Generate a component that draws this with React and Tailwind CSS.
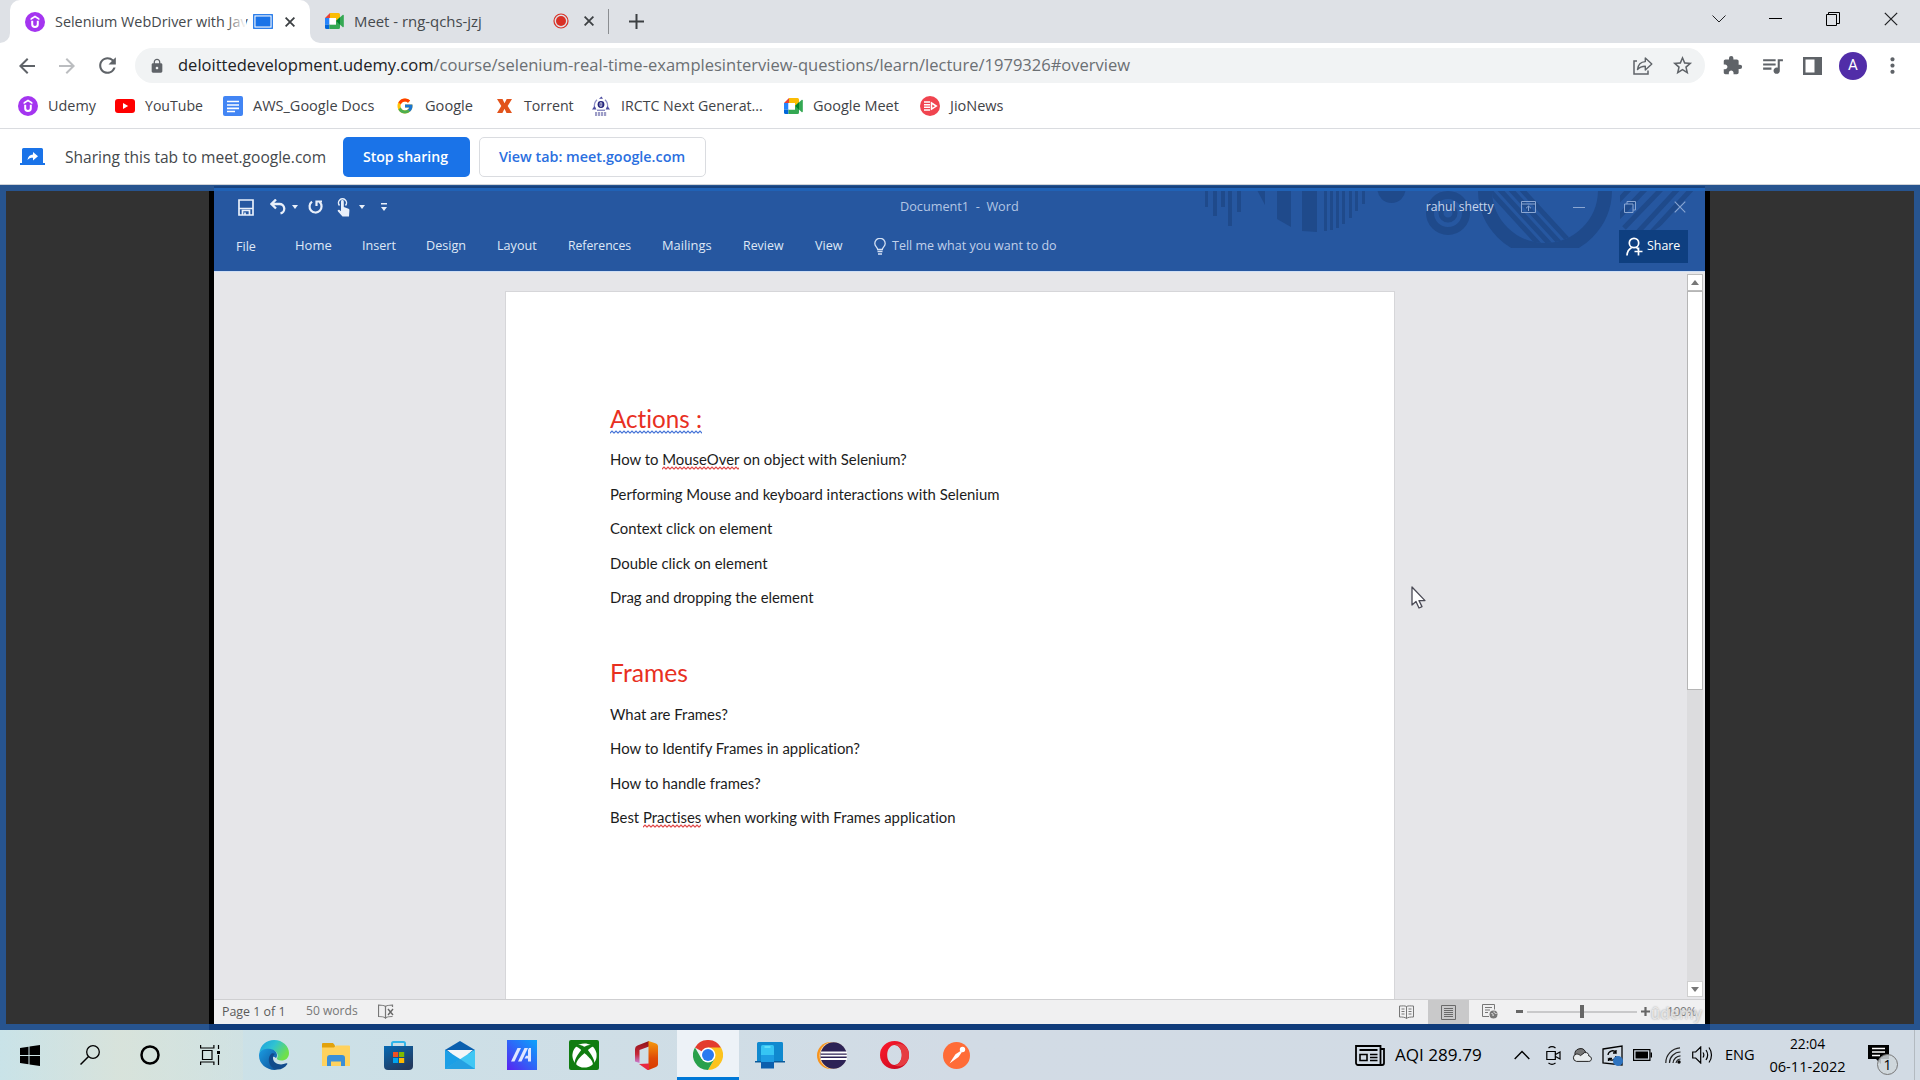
import React from "react";
import {
  MdArrowBack,
  MdArrowForward,
  MdRefresh,
  MdLock,
  MdExtension,
  MdStarBorder,
  MdQueueMusic,
  MdMoreVert,
} from "react-icons/md";
import { FcGoogle } from "react-icons/fc";
import { FaXbox } from "react-icons/fa";

/* ---------- small logos ---------- */

function UdemyLogo() {
  return (
    <svg width="20" height="20" viewBox="0 0 20 20">
      <circle cx="10" cy="10" r="10" fill="#a435f0" />
      <path d="M5.600 6.300 10 3.600l4.400 2.700v1.900L10 5.600 5.600 8.200z" fill="#fff" />
      <path d="M7.200 8.800v3.400a2.800 2.800 0 0 0 5.600 0V8.800" fill="none" stroke="#fff" strokeWidth="2" />
    </svg>
  );
}

function MeetLogo() {
  return (
    <svg width="19" height="16" viewBox="0 0 19 16">
      <path d="M0 5 5 0v5z" fill="#ea4335" />
      <path d="M5 0h8.500A1.500 1.500 0 0 1 15 1.500V6l-4 2.600V5H5z" fill="#fbbc04" />
      <path d="M0 5h4.500v6.500H0z" fill="#2684fc" />
      <path d="M0 11.500h4.500V16h-3A1.500 1.500 0 0 1 0 14.500z" fill="#0066da" />
      <path d="M4.500 11.500H11V8l4 3v3.500a1.500 1.500 0 0 1-1.500 1.500h-9z" fill="#34a853" />
      <path d="M4.500 5H11v6.500H4.500z" fill="#fff" />
      <path d="m11 8 6.600-6c.5-.4 1.200-.1 1.200.5v11c0 .6-.7.900-1.200.5z" fill="#34a853" />
      <path d="m11 8 4-3.700v7.400z" fill="#00832d" />
    </svg>
  );
}

function YouTubeLogo() {
  return (
    <svg width="20" height="14" viewBox="0 0 20 14">
      <rect width="20" height="14" rx="3" fill="#f00" />
      <path d="M8 4v6l5.200-3z" fill="#fff" />
    </svg>
  );
}

function DocsLogo() {
  return (
    <svg width="20" height="20" viewBox="0 0 20 20">
      <rect width="20" height="20" rx="2" fill="#4285f4" />
      <path d="M4 5.500h12M4 9h12M4 12.300h12M4 15.500h8" stroke="#fff" strokeWidth="1.700" />
    </svg>
  );
}

function TorrentLogo() {
  return (
    <svg width="15" height="14" viewBox="0 0 15 14">
      <path d="M0 0h5.500l2 4.300L9.700 0H15l-4.300 7L15 14H9.500l-2-4.300L5.400 14H0l4.300-7z" fill="#e2531b" />
    </svg>
  );
}

function IrctcLogo() {
  return (
    <svg width="18" height="20" viewBox="0 0 18 20">
      <circle cx="9" cy="8.500" r="3.400" fill="#23237c" />
      <path d="M8 6.800h1.800v3.400H8z" stroke="#fff" strokeWidth=".7" fill="none" />
      <path d="M5 3.800C2.500 6 1.800 9 2.800 12.500M13 3.800c2.500 2.200 3.200 5.200 2.200 8.700" fill="none" stroke="#8f8fc6" strokeWidth="1.300" />
      <path d="M5 14.200h8" stroke="#5b5ba8" strokeWidth="1" />
      <path d="M0 13.500 2.500 10l2 3.500zM18 13.500 15.500 10l-2 3.500zM7 2.800 9.500.4l1.500 2.400z" fill="#4b4ba0" />
      <path d="M3 17h12M3 19h12" stroke="#3c3c90" strokeWidth="1.100" strokeDasharray="2.200 .8" />
    </svg>
  );
}

function JioLogo() {
  return (
    <svg width="20" height="20" viewBox="0 0 20 20">
      <circle cx="10" cy="10" r="10" fill="#f0444f" />
      <path d="M4 6h6M4 8.700h6M4 11.300h6M4 14h6" stroke="#fff" strokeWidth="1.400" />
      <path d="M11.500 7v6.200l4.800-3.100z" fill="none" stroke="#fff" strokeWidth="1.500" />
    </svg>
  );
}

const Cross = ({ size = 10, stroke = "#3c4043", width = 1.8 }) => (
  <svg width={size} height={size} viewBox="0 0 10 10">
    <path d="m.6.6 8.800 8.800M9.400.6.6 9.400" stroke={stroke} strokeWidth={width} />
  </svg>
);

/* ---------- browser chrome ---------- */

function TabStrip() {
  return (
    <div className="flex h-[43px] bg-[#dee1e6]">
      <div className="flex w-[10px] items-end bg-white">
        <div className="h-full w-full rounded-br-[10px] bg-[#dee1e6]" />
      </div>
      <div className="flex w-[300px] items-center rounded-t-[10px] bg-white pl-[15px]">
        <UdemyLogo />
        <span className="relative ml-[10px] w-[191px] whitespace-nowrap text-[14.400px] text-[#45494d]">
          Selenium WebDriver with Jav
          <span className="absolute inset-y-0 right-0 w-[20px] bg-gradient-to-r from-white/0 to-white" />
        </span>
        <svg className="ml-[7px]" width="20" height="15" viewBox="0 0 20 15">
          <rect x=".75" y=".75" width="18.500" height="13.500" fill="#fff" stroke="#1a73e8" strokeWidth="1.300" />
          <rect x="2.500" y="2.500" width="15" height="10" fill="#1a73e8" />
        </svg>
        <span className="ml-[12px]"><Cross /></span>
      </div>
      <div className="w-[10px] bg-white">
        <div className="h-full w-full rounded-bl-[10px] bg-[#dee1e6]" />
      </div>
      <div className="flex w-[288px] items-center pb-[1px] pl-[5px]">
        <MeetLogo />
        <span className="ml-[10px] w-[199px] text-[14.900px] text-[#45494d]">Meet - rng-qchs-jzj</span>
        <svg width="16" height="16" viewBox="0 0 16 16">
          <circle cx="8" cy="8" r="7" fill="none" stroke="#d93025" strokeWidth="1.200" />
          <circle cx="8" cy="8" r="5" fill="#d93025" />
        </svg>
        <span className="ml-[15px]"><Cross /></span>
      </div>
      <div className="mt-[9px] h-[25px] w-px bg-[#8a8d91]" />
      <svg className="ml-[20px] mt-[14px]" width="15" height="15" viewBox="0 0 15 15">
        <path d="M7.500 0v15M0 7.500h15" stroke="#3c4043" strokeWidth="2" />
      </svg>
      <div className="ml-auto mr-[22px] flex h-[37px] items-center text-black">
        <svg className="mr-[43px]" width="14" height="8" viewBox="0 0 14 8">
          <path d="m.5.5 6.500 6.500L13.500.5" fill="none" stroke="#202124" />
        </svg>
        <span className="mr-[44px] h-px w-[13px] bg-black" />
        <svg className="mr-[44px]" width="14" height="14" viewBox="0 0 14 14">
          <path d="M.5 2.500h10v11H.5zM2.500 2.500v-2h11v11h-3" fill="none" stroke="#000" />
        </svg>
        <Cross size={14} stroke="#202124" width={0.9} />
      </div>
    </div>
  );
}

function Toolbar() {
  return (
    <div className="flex h-[43px] items-center bg-white pt-[2px] text-[#5f6368]">
      <MdArrowBack className="ml-[15px]" size={24} />
      <MdArrowForward className="ml-[16px] text-[#bbbdc0]" size={24} />
      <MdRefresh className="ml-[16px]" size={25} />
      <div className="ml-[15px] flex h-[35px] w-[1570px] items-center rounded-full bg-[#f1f3f4] pl-[14px] pr-[11px]">
        <MdLock size={16} />
        <span className="ml-[13px] whitespace-nowrap text-[16.540px] text-[#6b6f73]">
          <span className="text-[#202124]">deloittedevelopment.udemy.com</span>
          /course/selenium-real-time-examplesinterview-questions/learn/lecture/1979326#overview
        </span>
        <svg className="ml-auto mr-[18px]" width="20" height="19" viewBox="0 0 20 19">
          <path d="M4 5H1v13h14v-3.500" fill="none" stroke="#5f6368" strokeWidth="1.500" />
          <path d="M4.500 13.500c.6-5 3.500-7.700 7.800-7.900V2l6.500 6-6.500 6v-3.800c-3.300 0-5.800.9-7.800 3.300z" fill="none" stroke="#5f6368" strokeWidth="1.400" strokeLinejoin="round" />
        </svg>
        <MdStarBorder size={23} />
      </div>
      <MdExtension className="ml-[17px]" size={21} />
      <MdQueueMusic className="ml-[17px]" size={25} />
      <svg className="ml-[18px]" width="19" height="18" viewBox="0 0 19 18">
        <path d="M0 0h19v18H0zM2.500 2.500v13h9v-13z" fill="#5f6368" fillRule="evenodd" />
      </svg>
      <div className="ml-[17px] flex h-[28px] w-[28px] items-center justify-center rounded-full bg-[#512da8] font-[Roboto] text-[15px] text-white">
        A
      </div>
      <MdMoreVert className="ml-[13px]" size={25} />
    </div>
  );
}

const bookmarks = [
  { name: "Udemy", Logo: UdemyLogo, cell: "w-[97px]", font: "text-[14.400px]" },
  { name: "YouTube", Logo: YouTubeLogo, cell: "w-[108px]", font: "text-[14.100px]" },
  { name: "AWS_Google Docs", Logo: DocsLogo, cell: "w-[172px]", font: "text-[14.500px]" },
  { name: "Google", Logo: () => <FcGoogle size={18} />, cell: "w-[99px]", font: "text-[14.600px]" },
  { name: "Torrent", Logo: TorrentLogo, cell: "w-[97px]", font: "text-[14.200px]" },
  { name: "IRCTC Next Generat...", Logo: IrctcLogo, cell: "w-[192px]", font: "text-[14.200px]" },
  { name: "Google Meet", Logo: MeetLogo, cell: "w-[137px]", font: "text-[14.500px]" },
  { name: "JioNews", Logo: JioLogo, cell: "w-[120px]", font: "text-[14.500px]" },
];

function BookmarksBar() {
  return (
    <div className="flex h-[43px] items-center border-b border-[#dadce0] bg-white pb-[2px] pl-[18px]">
      {bookmarks.map(({ name, Logo, cell, font }) => (
        <div key={name} className={`flex items-center whitespace-nowrap text-[#3f4347] ${cell} ${font}`}>
          <span className="flex w-[20px] justify-center"><Logo /></span>
          <span className="ml-[10px]">{name}</span>
        </div>
      ))}
    </div>
  );
}

function SharingBar() {
  return (
    <div className="flex h-[56px] items-center border-b border-[#d0d3d8] bg-white pl-[20px]">
      <svg width="25" height="18" viewBox="0 0 25 18">
        <path d="M3.500 0h18A1.500 1.500 0 0 1 23 1.500V15H25v2H0v-2h2V1.500A1.500 1.500 0 0 1 3.500 0z" fill="#1a73e8" />
        <path d="M7.500 12c.4-3.400 2.400-5.200 5.500-5.400V4l5 4.300-5 4.200V9.800c-2.500 0-4.200.6-5.500 2.200z" fill="#fff" />
      </svg>
      <span className="ml-[20px] mt-[2px] w-[278px] whitespace-nowrap text-[15.550px] text-[#44484c]">
        Sharing this tab to meet.google.com
      </span>
      <button className="h-[40px] w-[127px] rounded-[5px] bg-[#1a73e8] pr-[2px] text-[14.100px] font-semibold text-white">
        Stop sharing
      </button>
      <button className="ml-[9px] h-[40px] w-[227px] rounded-[5px] border border-[#dadce0] pr-[1px] text-[14.350px] font-semibold text-[#2a6fe0]">
        View tab: meet.google.com
      </button>
    </div>
  );
}

/* ---------- Word window ---------- */

const Caret = ({ className }) => (
  <svg className={className} width="6" height="4" viewBox="0 0 6 4">
    <path d="M0 0h6L3 4z" fill="#e8effa" />
  </svg>
);

/* circuit artwork along the top right of the title bar */
function HeaderArtwork() {
  return (
    <svg className="absolute right-0 top-0" width="525" height="79" viewBox="1180 191 525 79" fill="#1f4a8b">
      <defs>
        <clipPath id="bigRing"><rect x="1470" y="180" width="150" height="68" /></clipPath>
        <clipPath id="ringHole"><circle cx="1545" cy="190" r="53" /></clipPath>
        <clipPath id="rightStripes"><path d="M1620 185h85v12l-50 33h-35z" /></clipPath>
      </defs>
      <path d="M1205 190h3v17h-3zM1213 190h4v26h-4zM1221 190h4v17h-4zM1228 190h4v36h-4zM1237 190h4v22h-4z" />
      <path d="M1257 190h8v15zM1277 190h14v37l-14-8zM1302 190h15v42l-15-1z" />
      <path d="M1324 190h3v41h-3zM1330 190h3v40h-3zM1336 190h3v38h-3zM1342 190h3v34h-3zM1349 190h3v28h-3zM1355 190h3v21h-3zM1362 190h3v14h-3z" />
      <circle cx="1391.500" cy="189" r="14" />
      <circle cx="1448" cy="213" r="18" fill="none" stroke="#1f4a8b" strokeWidth="8" />
      <circle cx="1448" cy="213" r="7" fill="none" stroke="#1f4a8b" strokeWidth="5" />
      <g clipPath="url(#bigRing)">
        <circle cx="1545" cy="190" r="60" fill="none" stroke="#1f4a8b" strokeWidth="14" />
      </g>
      <g clipPath="url(#ringHole)" stroke="#1f4a8b" strokeWidth="5">
        <path d="m1480 180 66 72M1491 180l66 72M1502 180l66 72M1513 180l66 72" />
      </g>
      <g clipPath="url(#rightStripes)" stroke="#1f4a8b" strokeWidth="5">
        <path d="m1600 220 40-42M1612 224l44-46M1624 228l48-50M1638 232l50-54M1650 234l50-54" />
      </g>
    </svg>
  );
}

const ribbonTabs = [
  { name: "File", cell: "w-[59px]", font: "text-[12.600px] pt-[2px]" },
  { name: "Home", cell: "w-[67px]", font: "text-[13px]" },
  { name: "Insert", cell: "w-[64px]", font: "text-[12.600px]" },
  { name: "Design", cell: "w-[71px]", font: "text-[12.600px]" },
  { name: "Layout", cell: "w-[71px]", font: "text-[12.600px]" },
  { name: "References", cell: "w-[94px]", font: "text-[12.200px]" },
  { name: "Mailings", cell: "w-[81px]", font: "text-[12.900px]" },
  { name: "Review", cell: "w-[72px]", font: "text-[12.400px]" },
  { name: "View", cell: "w-[59px]", font: "text-[12.600px]" },
];

function WordHeader() {
  return (
    <div className="relative h-[81px] border-b border-[#cfdff5] bg-[#2657a0]">
      <HeaderArtwork />
      <div className="relative flex h-[32px] items-center pl-[24px] text-[#e8effa]">
        <svg width="16" height="17" viewBox="0 0 16 17">
          <path d="M1 1h14v15H1zM1 9.500h14M4.500 16v-4.500h7V16M7 13.500V16" fill="none" stroke="#e8effa" strokeWidth="1.700" />
        </svg>
        <svg className="ml-[16px]" width="16" height="16" viewBox="0 0 16 16">
          <path d="M6 .5 1.500 5 6 9.500M2 5h7.500a4.700 4.700 0 0 1 1 9.300" fill="none" stroke="#e8effa" strokeWidth="2.300" />
        </svg>
        <Caret className="ml-[6px]" />
        <svg className="ml-[10px]" width="15" height="16" viewBox="0 0 15 16">
          <path d="M4 2.700a6 6 0 1 0 7.500.3M8.500 7V2.500H14" fill="none" stroke="#e8effa" strokeWidth="2.200" />
        </svg>
        <svg className="ml-[14px]" width="13" height="19" viewBox="0 0 13 19">
          <path d="M4 9V3.500a1.400 1.400 0 0 1 2.800 0V9l4.700 1.800c.8.300 1 .8.900 1.700L12 18.500H5.500L1 13.500c-1-1.300.5-2.300 1.500-1.500L4 13.200z" fill="#e8effa" />
          <path d="M2.500 7.500a4 4 0 1 1 6 0" fill="none" stroke="#e8effa" strokeWidth="1.500" />
        </svg>
        <Caret className="ml-[9px]" />
        <svg className="ml-[16px]" width="6" height="9" viewBox="0 0 6 9">
          <path d="M0 0h6v1.500H0zM0 4h6L3 8z" fill="#e8effa" />
        </svg>
        <span className="ml-[513px] whitespace-pre text-[12.700px] text-[#b3c6e4]">Document1  -  Word</span>
        <span className="ml-[407px] w-[95px] text-[12.200px] text-[#c8d6ec]">rahul shetty</span>
        <svg width="15" height="12" viewBox="0 0 15 12">
          <path d="M.5.5h14v11H.5zM.5 3h14M7.500 10V5M5 7.300 7.500 5 10 7.300" fill="none" stroke="#8aa6d2" />
        </svg>
        <span className="ml-[37px] h-px w-[12px] bg-[#8aa6d2]" />
        <svg className="ml-[39px]" width="12" height="12" viewBox="0 0 12 12">
          <path d="M.5 3h8.500v8.500H.5zM3 3V.5h8.500V9H9" fill="none" stroke="#8aa6d2" />
        </svg>
        <span className="ml-[38px]"><Cross size={12} stroke="#8aa6d2" width={0.9} /></span>
      </div>
      <div className="relative flex h-[46px] items-center pl-[22px] text-[#dfe8f6]">
        {ribbonTabs.map(({ name, cell, font }) => (
          <span key={name} className={`${cell} ${font}`}>{name}</span>
        ))}
        <svg width="12" height="17" viewBox="0 0 12 17">
          <path d="M3.700 11.500c0-2-2.900-3-2.900-6a5.200 5.200 0 0 1 10.400 0c0 3-2.900 4-2.900 6z" fill="none" stroke="#d3e0f3" strokeWidth="1.300" />
          <path d="M3.500 13.500h5M4 16h4" stroke="#d3e0f3" strokeWidth="1.500" />
        </svg>
        <span className="ml-[6px] text-[12.520px] text-[#c0d0ea]">Tell me what you want to do</span>
        <div className="ml-auto mr-[17px] flex h-[33px] w-[69px] items-center bg-[#0e3f80] pl-[7px] text-[12.400px] text-white">
          <svg width="17" height="19" viewBox="0 0 17 19">
            <circle cx="8" cy="6" r="4.700" fill="none" stroke="#fff" strokeWidth="1.700" />
            <path d="M1 18.500c.2-4 2-6.500 4.500-7.800M10 10l2 2M12.500 10.500v8M8.500 14.500h8" fill="none" stroke="#fff" strokeWidth="1.700" />
          </svg>
          <span className="ml-[4px]">Share</span>
        </div>
      </div>
    </div>
  );
}

function Squiggle({ children, color, offset }) {
  const id = `wave-${color.slice(1)}`;
  return (
    <span className="relative">
      {children}
      <svg className={`absolute left-0 h-[4px] w-full ${offset}`}>
        <defs>
          <pattern id={id} width="4" height="4" patternUnits="userSpaceOnUse">
            <path d="M-1 4 0 3l2-2 2 2 1 1" fill="none" stroke={color} strokeWidth="1.200" />
          </pattern>
        </defs>
        <rect width="100%" height="4" fill={`url(#${id})`} />
      </svg>
    </span>
  );
}

function WordPage() {
  return (
    <div className="mt-[19px] w-[890px] border border-b-0 border-[#d6d6d9] bg-white pl-[104px] pt-[102px] font-[Lato] text-[14.900px] text-[#1c1c1c] [font-variant-ligatures:none]">
      <h1 className="h-[48.400px] text-[24.200px] leading-[49.400px] text-[#e8301f]">
        <Squiggle color="#4472d6" offset="bottom-[-1px]">Actions :</Squiggle>
      </h1>
      <div className="leading-[34.500px]">
        <p>How to <Squiggle color="#e04545" offset="bottom-[-2px]">MouseOver</Squiggle> on object with Selenium?</p>
        <p>Performing Mouse and keyboard interactions with Selenium</p>
        <p>Context click on element</p>
        <p>Double click on element</p>
        <p>Drag and dropping the element</p>
      </div>
      <h1 className="mt-[34px] h-[47.800px] text-[24.700px] leading-[48.800px] text-[#e8301f]">Frames</h1>
      <div className="leading-[34.500px]">
        <p>What are Frames?</p>
        <p>How to Identify Frames in application?</p>
        <p>How to handle frames?</p>
        <p>Best <Squiggle color="#e04545" offset="bottom-[-2px]">Practises</Squiggle> when working with Frames application</p>
      </div>
    </div>
  );
}

function WordScrollbar() {
  return (
    <div className="ml-auto mr-[2px] mt-[2px] flex h-[723px] w-[16px] flex-col bg-[#dcdcde]">
      <div className="flex h-[17px] items-center justify-center border border-[#bdbdbd] bg-white">
        <svg width="8" height="5" viewBox="0 0 8 5"><path d="M0 5h8L4 0z" fill="#777" /></svg>
      </div>
      <div className="h-[399px] border border-[#b5b5b5] bg-white" />
      <div className="mt-auto flex h-[16px] items-center justify-center border border-[#cfcfcf] bg-white">
        <svg width="8" height="5" viewBox="0 0 8 5"><path d="M0 0h8L4 5z" fill="#777" /></svg>
      </div>
    </div>
  );
}

function WordStatusBar() {
  return (
    <div className="relative flex h-[25px] items-center border-t border-[#cfcfd1] bg-[#f0f0f1] pb-[1px] pl-[8px] text-[#5a5a5a]">
      <span className="w-[84px] pt-[2px] text-[12.400px]">Page 1 of 1</span>
      <span className="w-[72px] text-[12.100px] text-[#777]">50 words</span>
      <svg width="16" height="15" viewBox="0 0 16 15">
        <path d="M7.500 2.500v11.500C6 12.500 4 12.500.5 12.500V1C4 1 6 1 7.500 2.500 9 1 11 1 14.500 1v2M7.500 14c1-1.300 4-1.500 7-1.500" fill="none" stroke="#777" strokeWidth="1.200" />
        <path d="m10 5 5 6M15 5l-5 6" stroke="#666" strokeWidth="1.400" />
      </svg>
      <svg className="ml-[1005px]" width="15" height="14" viewBox="0 0 15 14">
        <path d="M7.500 1.500v12C6 12 3 12 .5 12V1C3 1 6 .5 7.500 1.500 9 .5 12 1 14.500 1v11c-2.500 0-5.500 0-7 1.500M2.500 4h3M2.500 6.500h3M2.500 9h3M9.500 4h3M9.500 6.500h3M9.500 9h3" fill="none" stroke="#777" />
      </svg>
      <div className="ml-[14px] flex h-[24px] w-[41px] items-center justify-center self-start bg-[#c9c9ca]">
        <svg width="15" height="15" viewBox="0 0 15 15">
          <path d="M.5.500h14v14H.5zM3 3.500h9M3 5.500h9M3 7.500h9M3 9.500h9M3 11.500h9" fill="none" stroke="#6a6a6a" />
        </svg>
      </div>
      <svg className="ml-[13px]" width="16" height="15" viewBox="0 0 16 15">
        <path d="M7 12.500H.5v-12h12v5M3 3.500h7M3 6h5M3 8.500h3" fill="none" stroke="#777" />
        <circle cx="11.500" cy="10.500" r="4" fill="#777" />
        <path d="M9.500 9.500c1.500 0 2 1 1.500 2.500M12 7.500c0 1.500 1 2 2.500 2" stroke="#f0f0f1" fill="none" />
      </svg>
      <span className="ml-[18px] h-[3px] w-[7px] bg-[#666]" />
      <div className="ml-[4px] flex h-[13px] w-[110px] items-center justify-center">
        <span className="h-[2px] w-[53px] bg-[#c9c9ca]" />
        <span className="h-[13px] w-[4px] bg-[#666]" />
        <span className="h-[2px] w-[53px] bg-[#c9c9ca]" />
      </div>
      <svg className="ml-[4px]" width="9" height="9" viewBox="0 0 9 9">
        <path d="M4.500 0v9M0 4.500h9" stroke="#666" strokeWidth="2.200" />
      </svg>
      <span className="ml-[17px] text-[12px] tracking-[-0.3px] text-[#777]">100%</span>
      <span className="absolute right-[3px] top-[1px] text-[15.500px] font-semibold leading-[24px] text-white/60 [text-shadow:0_0_2px_#999]">ûdemy</span>
    </div>
  );
}

function WordWindow() {
  return (
    <div className="relative flex h-full w-[1491px] flex-col bg-[#e6e6e9]">
      <WordHeader />
      <div className="flex h-[727px] overflow-hidden">
        <div className="w-[291px]" />
        <WordPage />
        <WordScrollbar />
      </div>
      <WordStatusBar />
      <svg className="absolute left-[1197px] top-[395px]" width="15" height="23" viewBox="0 0 15 23">
        <path d="M1 1v18l4-3.500 3 6.500 3-1.400-3-6H14z" fill="#fff" stroke="#4a4a55" strokeWidth="1.300" strokeLinejoin="round" />
      </svg>
    </div>
  );
}

function SharedArea() {
  return (
    <div className="relative h-[845px] border-[6px] border-[#27548f] bg-[#323232]">
      <div className="ml-[203px] h-full w-[1501px] bg-black pl-[5px]">
        <WordWindow />
      </div>
      <div className="absolute -top-[5px] left-[208px] h-[5px] w-[1491px] border-t-2 border-[#17427f] bg-[#2062b6]" />
      <div className="absolute -bottom-[6px] left-[203px] h-[6px] w-[1501px] bg-[#103c7b]" />
    </div>
  );
}

/* ---------- Windows taskbar ---------- */

const taskIcons = {
  edge: (
    <svg width="30" height="30" viewBox="0 0 30 30">
      <defs>
        <linearGradient id="edgeTop" x1="0" y1="0" x2="1" y2=".5">
          <stop offset="0" stopColor="#1b9de0" /><stop offset=".5" stopColor="#30c3d2" /><stop offset="1" stopColor="#6fe04a" />
        </linearGradient>
        <linearGradient id="edgeLow" x1="0" y1="0" x2="1" y2="1">
          <stop offset="0" stopColor="#1b9de2" /><stop offset="1" stopColor="#0d4f98" />
        </linearGradient>
      </defs>
      <path d="M.3 13C1.500 5 7.500 0 15 0c9 0 15 6.500 15 13 0 5-3.500 7.500-7.500 7.500-3.500 0-5-1.300-4.500-2.300 1.500-2 1-7-5-8.200C7 9 2 11 .3 13z" fill="url(#edgeTop)" />
      <path d="M.2 13.500C2 9.500 6.500 8.500 10 8.700c5 .3 8 3.300 8 6.300 0 1.500-.5 2.500-1 3-4-3-7 .5-6 4.500.8 3.500 4 6.500 7.500 7.100C9 31.500-1.500 24 .2 13.500z" fill="url(#edgeLow)" />
      <path d="M12.500 13.500c-4 3.500-4 12 3 15.500 5 1.600 10-.7 12.700-4.800.6-.9-.2-1.300-1-.9-6.200 2.800-12.700.2-13.200-4.800-.1-2 .7-3.700 2-4.500-1-1-2.500-1-3.500-.5z" fill="#124b8c" />
    </svg>
  ),
  folder: (
    <svg width="28" height="24" viewBox="0 0 28 24">
      <path d="M0 1a1 1 0 0 1 1-1h10l2 2.500V6H0z" fill="#e2a20c" />
      <path d="M0 4.500h12l2-2h13a1 1 0 0 1 1 1V23H0z" fill="#ffd25e" />
      <path d="M5 23v-8a3 3 0 0 1 3-3h12a3 3 0 0 1 3 3v8h-4v-4.500h-10V23z" fill="#3b8fd8" />
    </svg>
  ),
  store: (
    <svg width="29" height="29" viewBox="0 0 29 29">
      <defs>
        <linearGradient id="bag" x1="0" y1="0" x2=".6" y2="1">
          <stop offset="0" stopColor="#0669b4" /><stop offset="1" stopColor="#233a5e" />
        </linearGradient>
      </defs>
      <path d="M8 6V2.500A1.500 1.500 0 0 1 9.500 1h10A1.500 1.500 0 0 1 21 2.500V6" fill="none" stroke="#31b5e9" strokeWidth="2" />
      <path d="M0 5h29v20a4 4 0 0 1-4 4H4a4 4 0 0 1-4-4z" fill="url(#bag)" />
      <path d="M9 11h5.200v5H9z" fill="#f25022" /><path d="M15 11h5.200v5H15z" fill="#7fba00" />
      <path d="M9 17h5.200v5H9z" fill="#00a4ef" /><path d="M15 17h5.200v5H15z" fill="#ffb900" />
    </svg>
  ),
  mail: (
    <svg width="30" height="28" viewBox="0 0 30 28">
      <path d="M0 9 15 0l15 9v4H0z" fill="#0a5fae" />
      <path d="M2 9h26l-13 11z" fill="#f4f6f8" />
      <path d="M0 8.500 15 18v10H0z" fill="#1c9fe6" />
      <path d="M30 8.500 0 28h30z" fill="#41c7f4" />
      <path d="m0 28 15-10 15 10z" fill="#1b93dc" opacity=".75" />
    </svg>
  ),
  asus: (
    <svg width="30" height="30" viewBox="0 0 30 30">
      <defs>
        <linearGradient id="asusBg" x1="0" y1="1" x2="1" y2="0">
          <stop offset="0" stopColor="#5a22f0" /><stop offset=".55" stopColor="#2b6cf8" /><stop offset="1" stopColor="#0aa4fb" />
        </linearGradient>
      </defs>
      <path d="M0 0h30v30H0z" fill="url(#asusBg)" />
      <path d="M4 21.500 10.500 8h3.500L7.500 21.500z" fill="#dfe6ff" />
      <path d="M11 21.500 17.500 8h3.500l-6.500 13.500z" fill="#dfe6ff" />
      <path d="M22 8h2v13.500h-3v-3h-3.500l1.600-2.800H21V10z" fill="#dfe6ff" />
    </svg>
  ),
  xbox: (
    <span className="flex h-[30px] w-[30px] items-center justify-center rounded-[2px] bg-[#107c10] text-white">
      <FaXbox size={25} />
    </span>
  ),
  office: (
    <svg width="23" height="29" viewBox="0 0 23 29">
      <defs>
        <linearGradient id="offL" x1="0" y1="0" x2="0" y2="1"><stop offset="0" stopColor="#8e1119" /><stop offset=".6" stopColor="#c62837" /><stop offset="1" stopColor="#c97fd6" /></linearGradient>
        <linearGradient id="offR" x1="0" y1="0" x2="0" y2="1"><stop offset="0" stopColor="#f59a0c" /><stop offset=".6" stopColor="#e04a08" /><stop offset="1" stopColor="#d83b01" /></linearGradient>
      </defs>
      <path d="M14 0 2.500 4.500A4 4 0 0 0 0 8v12.500L4.500 22V9l9.500-3.500z" fill="url(#offL)" />
      <path d="M13.500 0 21 2.500A3 3 0 0 1 23 5v18.500a3 3 0 0 1-2 2.500l-7.500 3z" fill="url(#offR)" />
      <path d="m4 23 10-.5V29h-1.500z" fill="#e8293f" />
    </svg>
  ),
  chrome: (
    <svg width="30" height="30" viewBox="0 0 30 30">
      <path d="M15 15 2 7.500a15 15 0 0 1 26 0z" fill="#e33b2e" />
      <path d="M15 15V7.500h13A15 15 0 0 1 15 30l6.500-11.200z" fill="#fcc31e" />
      <path d="M15 15 8.500 18.800 2 7.500A15 15 0 0 0 15 30l6.500-11.200z" fill="#28a04b" />
      <circle cx="15" cy="15" r="7.500" fill="#fff" />
      <circle cx="15" cy="15" r="6" fill="#2a7af0" />
    </svg>
  ),
  phone: (
    <svg width="30" height="27" viewBox="0 0 30 27">
      <path d="M2 1.500A1.500 1.500 0 0 1 3.500 0h23A1.500 1.500 0 0 1 28 1.500V19H2z" fill="#1089cf" />
      <path d="M0 19h30v1.500H0z" fill="#0a5b9b" />
      <path d="M6 4.500A1.500 1.500 0 0 1 7.500 3h10A1.500 1.500 0 0 1 19 4.500V13H6z" fill="#36c5f4" />
      <path d="M6 13h13v7H6z" fill="#1e9de3" /><path d="M6 20h13v6.500H6z" fill="#0c5fad" />
      <path d="M9.500 5h6" stroke="#6fe5fb" strokeWidth="1.500" />
    </svg>
  ),
  eclipse: (
    <svg width="30" height="27" viewBox="0 0 30 27">
      <circle cx="13.500" cy="13.500" r="13.500" fill="#f7941e" />
      <circle cx="16" cy="13.500" r="13.500" fill="#fbdcae" />
      <circle cx="16.600" cy="13.500" r="13.200" fill="#2c2255" />
      <path d="M4 10.500h26M3.500 13.700h26.500M4 17h26" stroke="#fff" strokeWidth="1.800" />
    </svg>
  ),
  opera: (
    <svg width="29" height="28" viewBox="0 0 29 28">
      <defs>
        <linearGradient id="op" x1="0" y1="0" x2="1" y2="1"><stop offset="0" stopColor="#ff1b2d" /><stop offset="1" stopColor="#c2061e" /></linearGradient>
      </defs>
      <path d="M14.500 0a14.500 14 0 1 0 0 28 14.500 14 0 1 0 0-28zm0 4c4 0 7.300 4.400 7.300 10s-3.300 10-7.300 10-7.300-4.400-7.300-10S10.500 4 14.500 4z" fill="url(#op)" fillRule="evenodd" />
      <path d="M14.500 4c5-3.500 14.500 0 14.500 10s-9.500 13.500-14.500 10c4 0 7.300-4.400 7.300-10S18.500 4 14.500 4z" fill="#e63c41" />
    </svg>
  ),
  postman: (
    <svg width="27" height="27" viewBox="0 0 27 27">
      <circle cx="13.500" cy="13.500" r="13.500" fill="#ff6c37" />
      <circle cx="19.500" cy="7.500" r="2.700" fill="#fff" />
      <path d="m17.500 9-5 3.300L10 16l-3.500 5.500L12 17.500l3.500-2.500 3.300-4.700z" fill="#fff" />
    </svg>
  ),
};

const taskOrder = ["edge", "folder", "store", "mail", "asus", "xbox", "office", "chrome", "phone", "eclipse", "opera", "postman"];

function Taskbar() {
  return (
    <div className="flex h-[50px] bg-gradient-to-r from-[#c9e3e8] via-[#d2dbe5] to-[#d2dbe4] text-black">
      <div className="flex w-[243px] bg-gradient-to-r from-[#dbe3d8]/0 via-[#dbe3d8]/80 to-[#dbe3d8]/30">
        <span className="flex w-[60px] items-center justify-center">
          <svg width="20" height="21" viewBox="0 0 20 21">
            <path d="m0 3 8.500-1.200V10H0zM9.500 1.600 20 0v10H9.500zM0 11h8.500v8.200L0 18zM9.500 11H20v10L9.500 19.400z" />
          </svg>
        </span>
        <span className="flex w-[60px] items-center justify-center">
          <svg width="20" height="20" viewBox="0 0 20 20">
            <circle cx="13" cy="7" r="6.300" fill="none" stroke="#000" strokeWidth="1.300" />
            <path d="M8.500 11.500.5 19.500" stroke="#000" strokeWidth="1.500" />
          </svg>
        </span>
        <span className="flex w-[60px] items-center justify-center">
          <svg width="20" height="20" viewBox="0 0 20 20"><circle cx="10" cy="10" r="8.500" fill="none" stroke="#000" strokeWidth="2.500" /></svg>
        </span>
        <span className="flex w-[60px] items-center justify-center">
          <svg width="21" height="20" viewBox="0 0 21 20" fill="none" stroke="#000" strokeWidth="1.200">
            <path d="M2.500 5.500h9.500v9H2.500zM.6 0v3h13.300V0M.6 20v-3h13.300v3M18.500 0v4M18.500 10v10" />
            <path d="M17 6h3v3h-3z" fill="#000" stroke="none" />
          </svg>
        </span>
      </div>
      {taskOrder.map((id) => (
        <span
          key={id}
          className={
            id === "chrome"
              ? "flex w-[62px] items-center justify-center border-b-[3px] border-[#0078d7] bg-[#edf2f7] pt-[3px]"
              : "flex w-[62px] items-center justify-center"
          }
        >
          {taskIcons[id]}
        </span>
      ))}

      <div className="ml-auto flex items-center">
        <svg width="30" height="21" viewBox="0 0 30 21" fill="none" stroke="#000">
          <path d="M1 1h24.500v19H3a2 2 0 0 1-2-2zM25.500 4H29v14a2 2 0 0 1-2 2h-3" strokeWidth="1.800" />
          <path d="M4.500 5h18" strokeWidth="2" />
          <path d="M5 9.500h7v6H5zM15 9.500h7.500M15 12.500h7.500M15 15.500h7.500" strokeWidth="1.600" />
        </svg>
        <span className="ml-[10px] w-[119px] text-[17.100px]">AQI 289.79</span>
        <svg width="16" height="10" viewBox="0 0 16 10"><path d="m.7 9 7.300-7.500L15.300 9" fill="none" stroke="#000" strokeWidth="1.400" /></svg>
        <svg className="ml-[16px]" width="15" height="19" viewBox="0 0 15 19" fill="none" stroke="#000" strokeWidth="1.200">
          <path d="M.8 5.500h8.500v8H.8zM9.500 8.500 14 6v7l-4.500-2.500M2.500 2c2-1.500 5-1.500 7 0M2.500 17c2 1.500 5 1.500 7 0" />
        </svg>
        <svg className="ml-[11px]" width="20" height="14" viewBox="0 0 20 14">
          <path d="M3 7a5.500 5.500 0 0 1 10.500-3L8 9z" fill="#777" stroke="#222" />
          <path d="M4.500 13.400a3.700 3.700 0 0 1 0-7.300c1.500-.2 3 .6 4 1.500l4-3c3-.6 4.500 1.500 4.300 3.400 3.500.5 3.500 5.400 0 5.400z" fill="#e9edef" stroke="#222" />
        </svg>
        <svg className="ml-[10px]" width="21" height="21" viewBox="0 0 21 21" fill="none" stroke="#000" strokeWidth="1.300">
          <path d="M1 4 20 1v19L1 18zM6 10a4.500 4.500 0 0 1 8-2.500V5M14 8h-3M14 11a4.500 4.500 0 0 1-7.500 3V16M7 13.500h3" />
          <circle cx="16" cy="16" r="5" fill="#2f74c0" stroke="none" />
        </svg>
        <svg className="ml-[10px]" width="19" height="12" viewBox="0 0 19 12">
          <path d="M.6.6h16.300v10.800H.6z" fill="none" stroke="#000" strokeWidth="1.200" />
          <path d="M2.500 2.500H15v7H2.500zM17.500 3.500H19v5h-1.500z" />
        </svg>
        <svg className="ml-[13px]" width="16" height="17" viewBox="0 0 16 17" fill="none" stroke="#222" strokeWidth="1.200">
          <path d="M.8 16A15 15 0 0 1 15 .8M4.500 16A11 11 0 0 1 15.500 5M8 16a8 8 0 0 1 7.500-7.200M11 16a5 5 0 0 1 4.500-4" />
          <circle cx="14" cy="15" r="1.700" fill="#000" stroke="none" />
        </svg>
        <svg className="ml-[11px]" width="21" height="18" viewBox="0 0 21 18" fill="none" stroke="#000" strokeWidth="1.200">
          <path d="M.7 6h3l5-5v16l-5-5h-3zM11 6.500c1 1.500 1 3.500 0 5M14 4c2 3 2 7 0 10M17 1.500c3.300 4.500 3.300 10.500 0 15" />
        </svg>
        <span className="ml-[12px] w-[44px] text-[14.600px]">ENG</span>
        <div className="flex w-[77px] flex-col items-center whitespace-nowrap text-[14.600px] leading-[23px]">
          <span className="text-[13.800px]">22:04</span>
          <span>06-11-2022</span>
        </div>
        <div className="relative ml-[22px] mr-[16px] h-[20px] w-[30px]">
          <svg className="absolute left-0 top-0" width="21" height="20" viewBox="0 0 21 20">
            <path d="M0 0h21v14h-8v5l-5-5H0z" />
            <path d="M4 3.500h13M4 7h13M4 10.500h8" stroke="#fff" strokeWidth="1.300" />
          </svg>
          <span className="absolute left-[9px] top-[9px] flex h-[21px] w-[21px] items-center justify-center rounded-full border border-[#777] bg-[#cfd6da]/85 text-[14px]">
            1
          </span>
        </div>
        <div className="mr-[5px] h-full w-px bg-[#b3bac0]" />
      </div>
    </div>
  );
}

export default function App() {
  return (
    <div className="flex h-[1080px] w-[1920px] flex-col overflow-hidden bg-white font-['Open_Sans',sans-serif]">
      <TabStrip />
      <Toolbar />
      <BookmarksBar />
      <SharingBar />
      <SharedArea />
      <Taskbar />
    </div>
  );
}
